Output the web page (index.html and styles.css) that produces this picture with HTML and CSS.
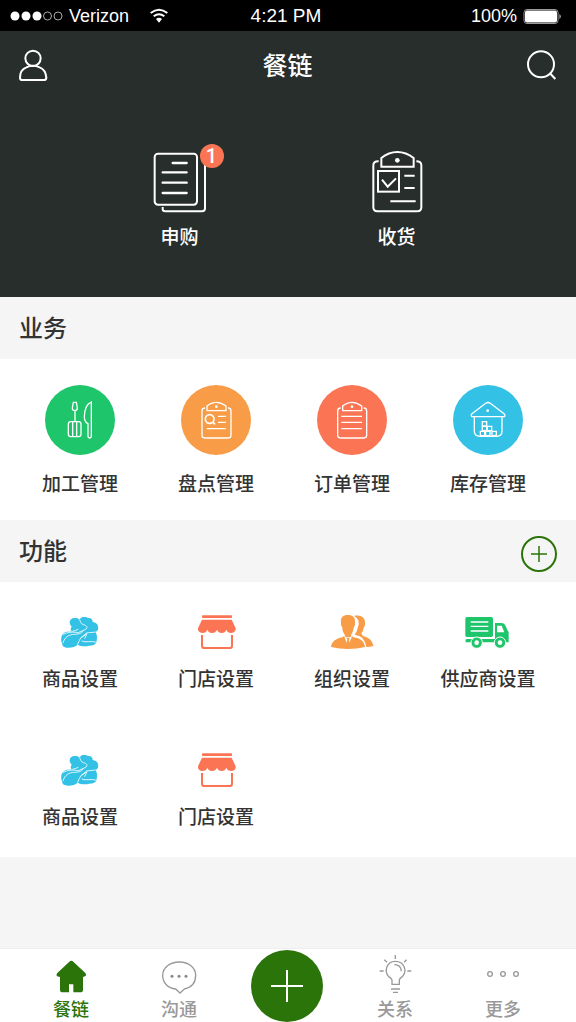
FILE: index.html
```html
<!DOCTYPE html>
<html lang="zh-CN">
<head>
<meta charset="utf-8">
<meta name="viewport" content="width=device-width, initial-scale=1">
<title>餐链</title>
<link rel="stylesheet" href="styles.css">
</head>
<body class="app">
<svg class="sprite" aria-hidden="true">
  <symbol id="produce" viewBox="78 36 144 120">
    <path fill="#34c1e6" d="M119 67C119 58 127 53 135 54C141 54 146 56 149 59C155 47 169 52 176 54C185 54 188 60 188 66C197 67 204 72 204 80C206 88 203 92 197 96C202 105 202 117 199 127C198 134 188 137 178 137C168 140 152 140 143 134C137 140 126 143 116 143C105 144 96 139 97 132C91 122 92 102 106 97C113 94 119 96 127 94C120 92 122 84 125 80C121 76 119 72 119 67Z"/>
    <g fill="none" stroke="#fff" stroke-width="2.500">
      <path d="M149 59C152 66 152 71 160 74C170 76 174 82 168 87C161 92 151 94 145 98C128 95 112 96 98 104"/>
      <path d="M127 94C134 93 139 90 145 88"/>
      <path d="M197 96C187 98 177 97 170 99L152 114L142 134M152 114L171 101L164 116M155 123C168 129 184 121 199 127"/>
      <path d="M99 129C104 111 117 103 134 103C143 102 153 102 160 93"/>
    </g>
  </symbol>
  <symbol id="shop" viewBox="486 36 144 120">
    <g fill="#fb7555">
      <rect x="516" y="46" width="90" height="8" rx="2"/>
      <path d="M516 59H605L617 85C618 93 612 99 604 99C596 99 591 95 589 89C587 95 582 99 575 99C568 99 563 95 561 89C559 95 553 99 546 99C539 99 534 95 532 89C530 95 525 99 517 99C509 99 503 93 504 85Z"/>
    </g>
    <path d="M516 105V137Q516 144 523 144H599Q606 144 606 137V105" fill="none" stroke="#fb7555" stroke-width="6"/>
  </symbol>
</svg>

<header class="top">
  <div class="status">
    <div class="carrier">
      <svg width="53" height="12" viewBox="0 0 53 12" aria-hidden="true">
        <g fill="#fff"><circle cx="5" cy="6" r="4.5"/><circle cx="16" cy="6" r="4.5"/><circle cx="27" cy="6" r="4.5"/></g>
        <g fill="none" stroke="#aaa"><circle cx="37.500" cy="6" r="4"/><circle cx="48" cy="6" r="4"/></g>
      </svg>
      <span>Verizon</span>
      <svg class="wifi" width="20" height="16" viewBox="448 22 60 48" aria-hidden="true">
        <g fill="none" stroke="#fff" stroke-width="6"><path d="M453 37Q478 17 503 37"/><path d="M462 47Q478 34 494 47"/></g>
        <path d="M469 55Q478 48 487 55L478 66Z" fill="#fff"/>
      </svg>
    </div>
    <time class="clock">4:21 PM</time>
    <div class="power">
      <span>100%</span>
      <svg width="39" height="17" viewBox="0 0 39 17" aria-hidden="true">
        <rect x="1" y="1.500" width="34" height="14" rx="3" fill="none" stroke="#999"/>
        <rect x="2" y="2.500" width="32" height="12" rx="2" fill="#fff"/>
        <path d="M36.500 6Q39 8.500 36.500 11Z" fill="#ccc"/>
      </svg>
    </div>
  </div>
  <div class="nav">
    <button class="plain" aria-label="我的">
      <svg width="32" height="35" viewBox="51 141 96 105" fill="none" stroke="#fff" stroke-width="6">
        <circle cx="99" cy="172" r="23"/>
        <path d="M79 199C66 204 60 218 60 230Q60 237 67 237H131Q139 237 139 230C138 218 132 204 119 199Q99 190 79 199Z"/>
      </svg>
    </button>
    <h1 class="title">餐链</h1>
    <button class="plain" aria-label="搜索">
      <svg width="32" height="35" viewBox="714 141 96 105" fill="none" stroke="#fff" stroke-width="6">
        <circle cx="759" cy="190" r="39"/><path d="M785 216L802 234"/>
      </svg>
    </button>
  </div>
  <div class="hero">
    <a class="item" href="#apply">
      <span class="badged">
        <svg width="56" height="64" viewBox="66 60 168 192" fill="none" stroke="#fff" stroke-width="6">
          <rect x="74" y="71" width="127" height="153" rx="10"/>
          <path d="M98 231V237Q98 244 106 244H216Q225 244 225 235V104Q225 98 219 95"/>
          <path d="M128 99H170M98 127H170M98 158H170M98 189H170" stroke-width="7" stroke-linecap="round"/>
        </svg>
        <span class="badge">1</span>
      </span>
      <span class="label">申购</span>
    </a>
    <a class="item" href="#receive">
      <svg width="56" height="64" viewBox="57 60 168 192" fill="none" stroke="#fff" stroke-width="6">
        <path d="M86 94Q70 93 70 106V232Q70 244 82 244H202Q214 244 214 232V106Q214 94 199 94"/>
        <path d="M94 110V84Q116 66 142 66Q168 66 191 84V110Z"/>
        <circle cx="142" cy="91" r="7" fill="#fff" stroke="none"/>
        <rect x="84" y="123" width="63" height="62"/>
        <path d="M96 149L113 170L138 145M163 137H194M163 174H194M121 214H197"/>
      </svg>
      <span class="label">收货</span>
    </a>
  </div>
</header>

<main class="main">
  <section>
    <div class="bar"><h2 class="heading">业务</h2></div>
    <div class="grid grid-business">
      <a class="item" href="#process">
        <svg class="disc green" width="70" height="70" viewBox="45 45 210 210" fill="none" stroke="#fff" stroke-width="4">
          <path d="M130 97H139L142 114Q142 122 134 122Q127 122 127 114ZM135 122V154"/>
          <rect x="115" y="155" width="38" height="45" rx="7"/>
          <path d="M128 156V199M140 156V199"/>
          <path d="M184 96V199Q184 204 179 204Q174 204 174 199V161Q163 157 163 139Q164 105 184 96Z"/>
        </svg>
        <span class="label">加工管理</span>
      </a>
      <a class="item" href="#check">
        <svg class="disc orange" width="70" height="70" viewBox="454 45 210 210" fill="none" stroke="#fff" stroke-width="4">
          <path d="M526 114Q517 114 517 123V196Q517 204 525 204H596Q604 204 604 196V123Q604 114 595 114"/>
          <path d="M532 122V108Q545 97 560 97Q575 97 589 108V122Z"/>
          <circle cx="560" cy="110" r="4" fill="#fff" stroke="none"/>
          <circle cx="540" cy="147" r="13" stroke-width="5"/>
          <path d="M549 156L556 163" stroke-width="5"/>
          <path d="M565 139H589M565 157H589M531 176H589"/>
        </svg>
        <span class="label">盘点管理</span>
      </a>
      <a class="item" href="#orders">
        <svg class="disc coral" width="70" height="70" viewBox="50 45 210 210" fill="none" stroke="#fff" stroke-width="4">
          <path d="M121 114Q112 114 112 123V196Q112 204 120 204H191Q199 204 199 196V123Q199 114 190 114"/>
          <path d="M127 122V108Q140 97 155 97Q170 97 184 108V122Z"/>
          <circle cx="155" cy="110" r="4" fill="#fff" stroke="none"/>
          <path d="M123 139H185M123 157H185M123 176H185"/>
        </svg>
        <span class="label">订单管理</span>
      </a>
      <a class="item" href="#stock">
        <svg class="disc blue" width="70" height="70" viewBox="455 45 210 210" fill="none" stroke="#fff" stroke-width="4">
          <path d="M553 100Q560 95 567 100L609 132Q612 136 610 140H511Q508 136 511 132Z"/>
          <circle cx="559" cy="122" r="4" fill="#fff" stroke="none"/>
          <path d="M519 141V185Q520 198 535 199H587Q601 198 602 185V141"/>
          <path d="M543 155H556V168H543ZM543 169H556V182H543ZM558 169H571V182H558ZM537 184H550V197H537ZM553 184H566V197H553ZM572 184H585V197H572Z"/>
        </svg>
        <span class="label">库存管理</span>
      </a>
    </div>
  </section>

  <section>
    <div class="bar">
      <h2 class="heading">功能</h2>
      <button class="add" aria-label="添加功能">
        <svg width="18" height="18" viewBox="0 0 18 18" stroke="#2b7409" stroke-width="1.500"><path d="M9 1V17M1 9H17"/></svg>
      </button>
    </div>
    <div class="grid grid-tools">
      <a class="item" href="#goods"><svg width="48" height="40"><use href="#produce"/></svg><span class="label">商品设置</span></a>
      <a class="item" href="#store"><svg width="48" height="40"><use href="#shop"/></svg><span class="label">门店设置</span></a>
      <a class="item" href="#team">
        <svg width="48" height="40" viewBox="84 36 144 120" fill="#f89c47">
          <path d="M162 48C181 43 196 52 195 69Q196 78 191 83Q190 94 184 100L189 108C207 113 218 122 220 138Q212 141 199 141C197 126 190 114 178 108L164 104Q172 94 173 84Q179 73 175 61Q171 52 162 48Z"/>
          <path d="M123 67C121 51 130 45 143 45C158 45 166 52 165 67Q167 76 161 83C160 92 157 99 152 106L161 112C181 115 193 123 195 141Q146 153 93 141C95 124 108 116 127 112L136 106C130 99 127 92 127 83Q121 76 123 67Z" />
          <path d="M132 107L144 138L157 107L150 112H139Z" fill="#fff"/>
          <path d="M140 114H149L147 120L150 133L144 140L139 133L142 120Z"/>
        </svg>
        <span class="label">组织设置</span>
      </a>
      <a class="item" href="#supplier">
        <svg width="48" height="40" viewBox="492 36 144 120" fill="#1fc56b">
          <rect x="496" y="51" width="83" height="60" rx="5"/>
          <path d="M585 69H606Q613 69 617 78L622 90L626 96V127H497Q495 117 501 117H585Z"/>
          <path d="M591 77H605L613 97H591ZM512 64H565V68H512ZM512 77H565V81H512ZM512 91H565V95H512Z" fill="#fff"/>
          <circle cx="530" cy="128" r="17" stroke="#fff" stroke-width="3"/><circle cx="600" cy="128" r="17" stroke="#fff" stroke-width="3"/>
          <g fill="#fff"><circle cx="530" cy="128" r="7"/><circle cx="600" cy="128" r="7"/></g>
        </svg>
        <span class="label">供应商设置</span>
      </a>
      <a class="item" href="#goods-2"><svg width="48" height="40"><use href="#produce"/></svg><span class="label">商品设置</span></a>
      <a class="item" href="#store-2"><svg width="48" height="40"><use href="#shop"/></svg><span class="label">门店设置</span></a>
    </div>
  </section>
</main>

<nav class="tabs">
  <a class="tab active" href="#home">
    <svg width="40" height="42" viewBox="153 42 120 126" fill="#2b7409">
      <path d="M208 65Q214 60 220 65L256 99Q260 104 257 108L249 111V149Q249 157 241 157H220V133H207V157H188Q180 157 180 149V111L171 109Q167 105 172 99Z"/>
    </svg>
    <span class="tab-label">餐链</span>
  </a>
  <a class="tab" href="#chat">
    <svg width="40" height="42" viewBox="477 42 120 126" fill="none" stroke="#999" stroke-width="4">
      <path d="M538 66C566 66 587 82 587 106C587 129 573 143 553 147L540 159L527 147C504 144 488 129 488 106C488 82 510 66 538 66Z"/>
      <g fill="#888" stroke="none"><circle cx="516" cy="109" r="4.500"/><circle cx="537" cy="109" r="4.500"/><circle cx="558" cy="109" r="4.500"/></g>
    </svg>
    <span class="tab-label">沟通</span>
  </a>
  <button class="create" aria-label="新建">
    <svg width="32" height="32" viewBox="0 0 32 32" stroke="#fff" stroke-width="2"><path d="M16 0V32M0 16H32"/></svg>
  </button>
  <a class="tab" href="#relations">
    <svg width="40" height="42" viewBox="261 42 120 126" fill="none" stroke="#999" stroke-width="4">
      <path d="M312 133V120Q310 115 302 110C288 94 295 64 322 64C350 64 358 94 343 110Q335 115 334 120V133Z"/>
      <path d="M319 74Q339 74 340 94M322 45V57M289 59L297 67M356 59L348 67M275 93H287M358 93H370M309 147H336M315 157H330"/>
    </svg>
    <span class="tab-label">关系</span>
  </a>
  <a class="tab" href="#more">
    <svg width="40" height="42" viewBox="585 42 120 126" fill="none" stroke="#999" stroke-width="4">
      <circle cx="606" cy="102" r="7"/><circle cx="645" cy="102" r="7"/><circle cx="684" cy="102" r="7"/>
    </svg>
    <span class="tab-label">更多</span>
  </a>
</nav>
</body>
</html>
```
FILE: styles.css
```css
* {
  box-sizing: border-box;
}

.app {
  display: flex;
  flex-direction: column;
  min-height: 100vh;
  margin: 0;
  background: #f5f5f5;
  color: #333;
  font-family: "Liberation Sans", "Noto Sans CJK SC", sans-serif;
}

.sprite {
  display: none;
}

svg {
  display: block;
}

button {
  padding: 0;
  border: 0;
  background: none;
  cursor: pointer;
}

a {
  color: inherit;
  text-decoration: none;
}

.top {
  background: #282e2c;
  color: #fff;
}

.status {
  display: grid;
  grid-template-columns: 1fr auto 1fr;
  align-items: center;
  height: 31px;
  padding: 1px 14px 0 10px;
  background: #000;
  font-size: 18px;
}

.clock {
  font-size: 19px;
}

.carrier,
.power {
  display: flex;
  align-items: center;
  gap: 6px;
}

.wifi {
  margin-left: 14px;
}

.power {
  justify-content: flex-end;
}

.nav {
  display: flex;
  align-items: center;
  justify-content: space-between;
  height: 68px;
  padding: 0 18px 0 17px;
}

.title {
  margin: 0;
  padding-bottom: 2px;
  font-size: 25px;
  font-weight: 500;
}

.hero {
  display: grid;
  grid-template-columns: 1fr 1fr;
  padding: 51px 71px 45px 71px;
}

.hero .item {
  gap: 10px;
}

.item {
  display: flex;
  flex-direction: column;
  align-items: center;
}

.label {
  font-size: 19px;
  font-weight: 500;
  line-height: 28px;
}

.badged {
  position: relative;
}

.badge {
  position: absolute;
  top: -6px;
  right: -16px;
  width: 24px;
  height: 24px;
  border-radius: 50%;
  background: #fb7555;
  font: 500 20px/24px Roboto, sans-serif;
  text-align: center;
}

.main {
  flex: 1;
}

.bar {
  display: flex;
  align-items: center;
  justify-content: space-between;
  height: 62px;
  padding: 0 19px;
}

.heading {
  margin: 0;
  padding-bottom: 4px;
  font-size: 24px;
  font-weight: 500;
}

.add {
  display: grid;
  place-items: center;
  width: 36px;
  height: 36px;
  margin-top: 6px;
  border: 2px solid #2b7409;
  border-radius: 50%;
}

.grid {
  display: grid;
  grid-template-columns: repeat(4, 1fr);
  background: #fff;
}

.grid-business {
  padding: 26px 20px 21px 12px;
}

.grid-business .item {
  gap: 16px;
}

.grid-tools {
  row-gap: 56px;
  padding: 30px 20px 25px 12px;
}

.grid-tools .item {
  gap: 14px;
}

.disc {
  border-radius: 50%;
}

.green {
  background: #1fc56b;
}

.orange {
  background: #f89c47;
}

.coral {
  background: #fb7555;
}

.blue {
  background: #34c1e6;
}

.tabs {
  display: grid;
  grid-template-columns: repeat(5, 1fr);
  height: 74px;
  padding: 0 19px 0 17px;
  border-top: 1px solid #eee;
  background: #fff;
}

.tab {
  display: flex;
  flex-direction: column;
  align-items: center;
  gap: 2px;
  padding-top: 5px;
  color: #999;
}

.tab-label {
  font-size: 18px;
  font-weight: 500;
  line-height: 25px;
}

.active {
  color: #2b7409;
}

.create {
  display: grid;
  place-items: center;
  place-self: center;
  width: 72px;
  height: 72px;
  border-radius: 50%;
  background: #2b7409;
}
```
